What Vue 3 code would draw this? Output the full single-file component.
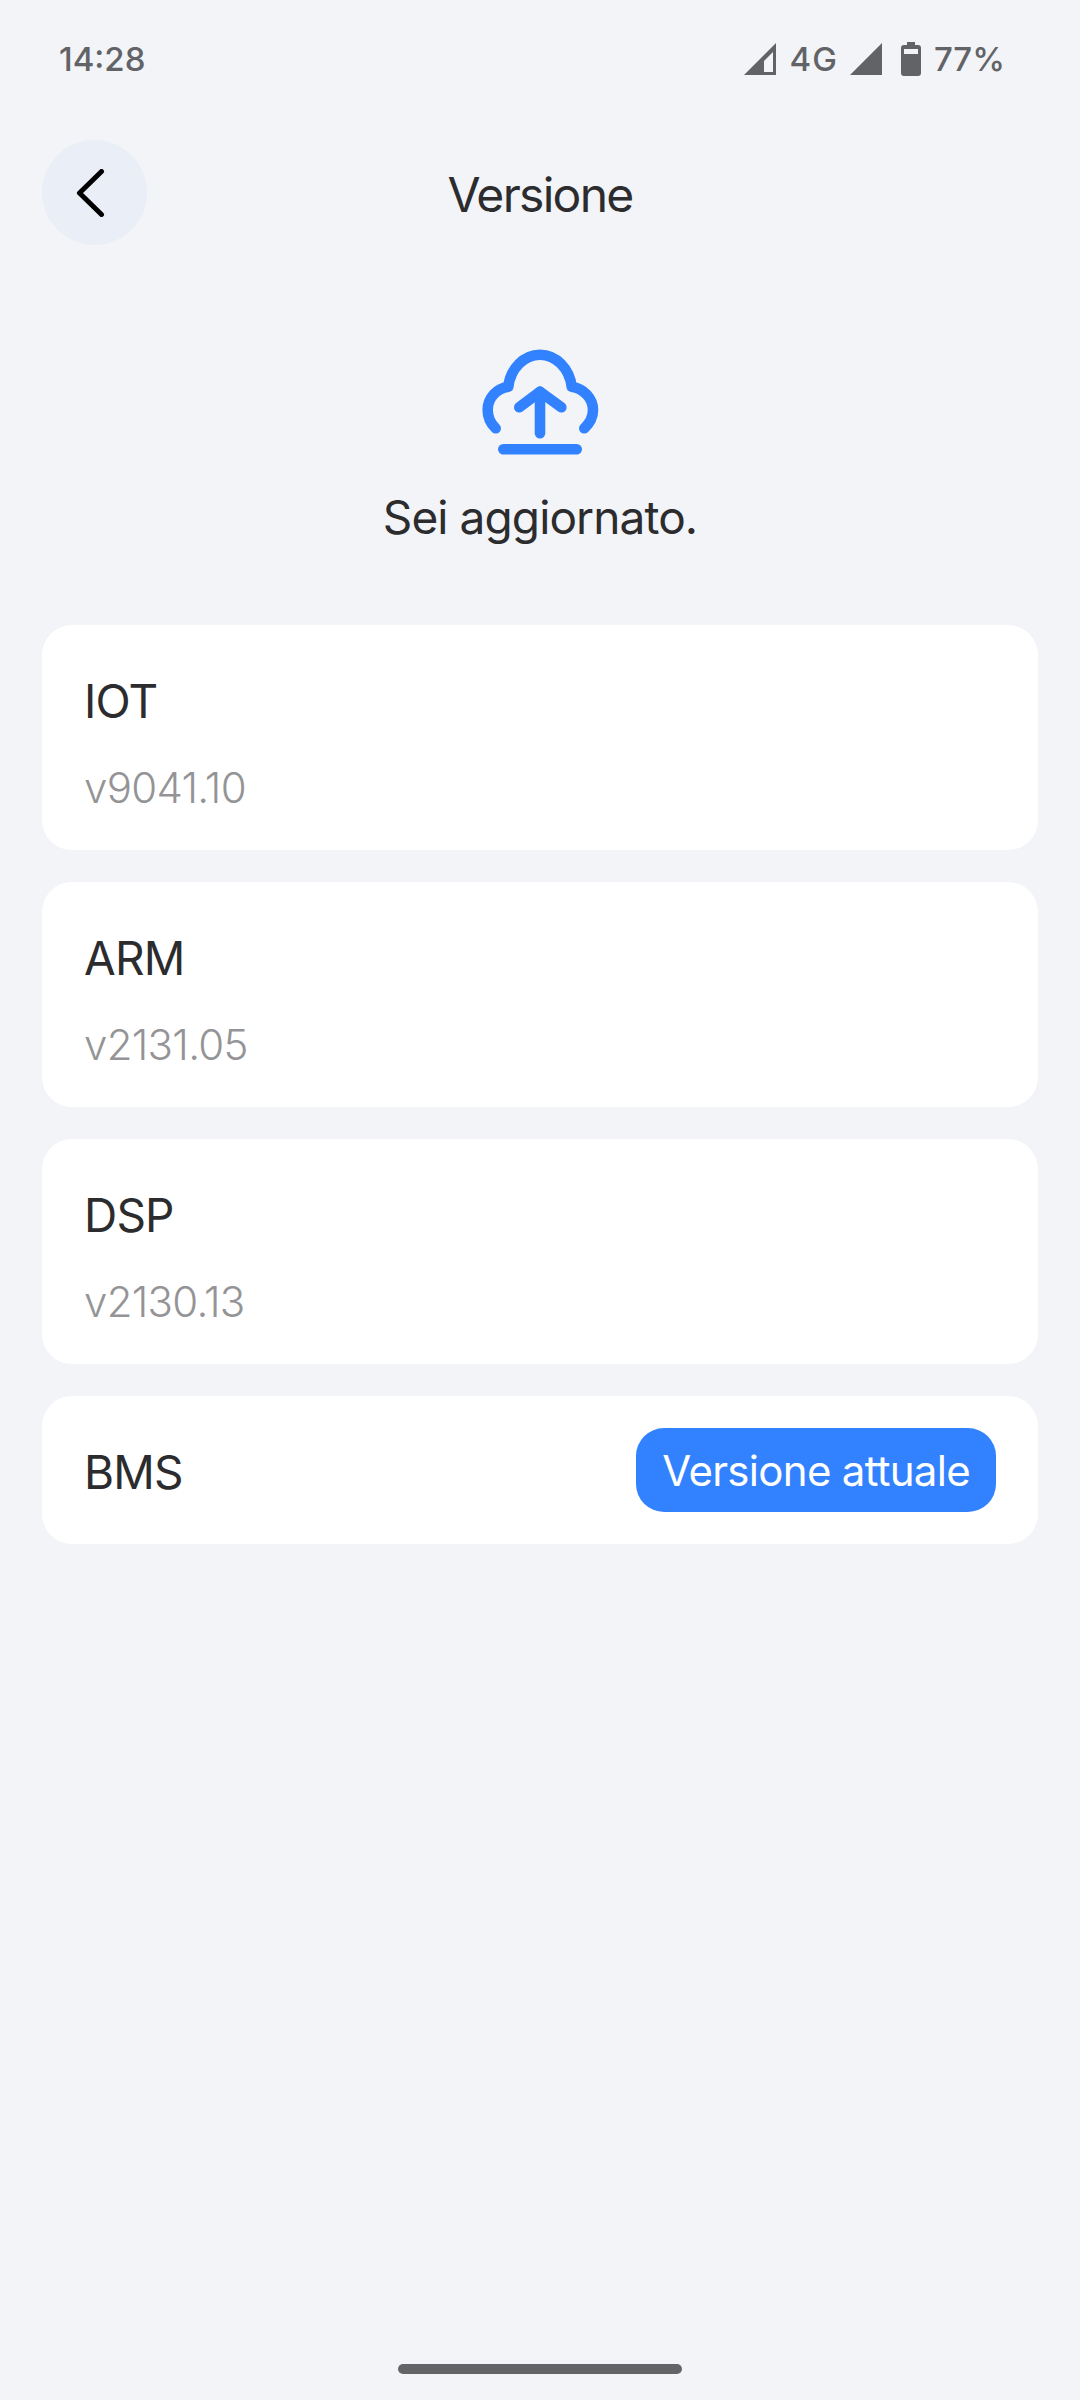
<template>
  <div class="screen">
    <!-- Status bar -->
    <div class="status-bar">
      <span class="time">14:28</span>
      <div class="status-right">
        <svg class="signal" width="32" height="32" viewBox="0 0 32 32">
          <path d="M32 0V32H0Z" fill="#626366" />
          <path d="M29 9V29H20V18Z" fill="#f2f4f8" />
        </svg>
        <span class="net">4G</span>
        <svg class="signal second" width="32" height="32" viewBox="0 0 32 32">
          <path d="M32 0V32H0Z" fill="#626366" />
        </svg>
        <svg class="battery" width="20" height="34" viewBox="0 0 20 34">
          <path d="M6 0H14V3H17Q20 3 20 6V31Q20 34 17 34H3Q0 34 0 31V6Q0 3 3 3H6Z" fill="#626366" />
          <rect x="3" y="7" width="14" height="5" fill="#f2f4f8" />
        </svg>
        <span class="pct">77%</span>
      </div>
    </div>

    <!-- Header -->
    <div class="header">
      <div class="back-btn">
        <svg width="38" height="48" viewBox="0 0 38 48" fill="none">
          <path d="M25.5 2.5L3.5 24L25.5 45.5" stroke="#000" stroke-width="5" stroke-linecap="round" stroke-linejoin="round" />
        </svg>
      </div>
      <h1 class="title">Versione</h1>
    </div>

    <!-- Update state -->
    <div class="state">
      <svg class="cloud" width="120" height="120" viewBox="0 0 120 120" fill="none">
        <g stroke="#3282ff" stroke-width="10.6" stroke-linecap="round" stroke-linejoin="round">
          <path d="M15.7 88.3C10.5 83.5 7.7 77 7.7 70C7.7 58 16.5 48.5 28.3 46.7C30.5 28.5 44 14.7 60 14.7C76 14.7 89.5 28.5 91.7 46.7C103.5 48.5 113 58 113 70C113 77 109.5 83.5 104.3 88.3" />
          <path d="M60 93.3V51.7" />
          <path d="M39.3 67.3L60 51.7L81.3 67.3" />
          <path d="M23.3 109.3H96.7" />
        </g>
      </svg>
      <p class="state-text">Sei aggiornato.</p>
    </div>

    <!-- Firmware list -->
    <div class="list">
      <div class="card" v-for="c in cards" :key="c.name">
        <div class="card-name">{{ c.name }}</div>
        <div class="card-version">{{ c.version }}</div>
      </div>
      <div class="card card-row">
        <div class="card-name">BMS</div>
        <div class="pill">Versione attuale</div>
      </div>
    </div>

    <div class="home-indicator"></div>
  </div>
</template>

<script setup>
const cards = [
  { name: 'IOT', version: 'v9041.10' },
  { name: 'ARM', version: 'v2131.05' },
  { name: 'DSP', version: 'v2130.13' },
]
</script>

<style>
html, body {
  margin: 0;
  background: #f2f4f8;
}
</style>

<style scoped>
.screen {
  width: 1080px;
  height: 2400px;
  background: #f2f4f8;
  font-family: Inter, 'Liberation Sans', sans-serif;
  display: flex;
  flex-direction: column;
  box-sizing: border-box;
  overflow: hidden;
}

.status-bar {
  height: 140px;
  padding: 0 75px 0 59px;
  display: flex;
  justify-content: space-between;
  align-items: flex-start;
  box-sizing: border-box;
  color: #626366;
  font-size: 33px;
  font-weight: 500;
}

.time {
  margin-top: 39px;
  line-height: 40px;
}

.status-right {
  display: flex;
  align-items: center;
  margin-top: 41px;
  height: 36px;
}

.net {
  margin-left: 14px;
  line-height: 36px;
  letter-spacing: 1px;
}

.signal.second {
  margin-left: 12px;
}

.battery {
  margin-left: 19px;
}

.pct {
  margin-left: 13px;
  line-height: 36px;
}

.header {
  height: 105px;
  margin: 0 42px;
  display: grid;
  grid-template-columns: 105px 1fr 105px;
  align-items: center;
}

.back-btn {
  width: 105px;
  height: 105px;
  border-radius: 50%;
  background: #e9eef7;
  display: flex;
  align-items: center;
  justify-content: center;
}

.title {
  margin: 4px 0 0;
  font-size: 48px;
  font-weight: 400;
  line-height: 60px;
  letter-spacing: -1.7px;
  text-align: center;
  color: #2c2c2e;
}

.state {
  margin-top: 95px;
  display: flex;
  flex-direction: column;
  align-items: center;
}

.state-text {
  margin: 27px 0 0;
  font-size: 46px;
  line-height: 60px;
  letter-spacing: -0.9px;
  color: #2c2c2e;
}

.list {
  margin: 78px 42px 0;
  display: flex;
  flex-direction: column;
  gap: 32px;
}

.card {
  height: 225px;
  padding: 11px 42px 0;
  box-sizing: border-box;
  background: #fff;
  border-radius: 30px;
  display: flex;
  flex-direction: column;
  justify-content: center;
  gap: 33px;
}

.card-row {
  height: 148px;
  padding-top: 0;
  flex-direction: row;
  align-items: center;
  justify-content: space-between;
  gap: 0;
}

.card-row .card-name {
  padding-top: 3px;
}

.card-name {
  font-size: 46px;
  line-height: 56px;
  letter-spacing: -0.8px;
  color: #2c2c2e;
}

.card-version {
  font-size: 42px;
  line-height: 52px;
  font-weight: 300;
  letter-spacing: -0.7px;
  color: #949497;
}

.pill {
  height: 84px;
  padding: 0 26px;
  border-radius: 28px;
  background: #3282ff;
  color: #fff;
  font-size: 42px;
  line-height: 86px;
  letter-spacing: -0.7px;
  white-space: nowrap;
}

.home-indicator {
  width: 284px;
  height: 10px;
  margin: auto auto 26px;
  border-radius: 5px;
  background: #636466;
}
</style>
